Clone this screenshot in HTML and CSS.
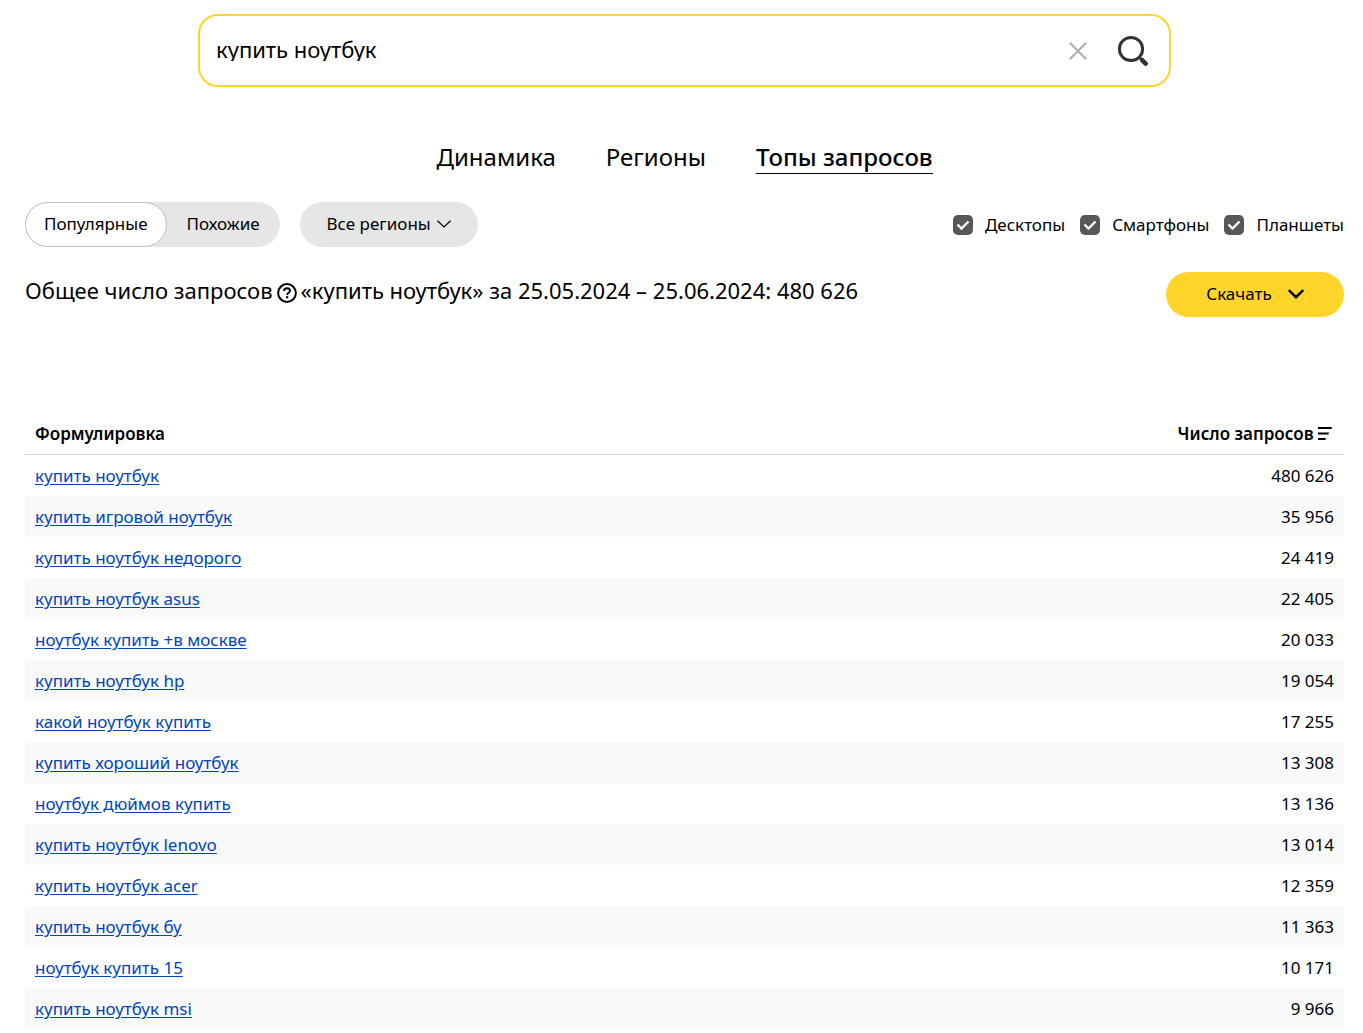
FILE: index.html
```html
<!DOCTYPE html>
<html lang="ru">
<head>
<meta charset="utf-8">
<meta name="viewport" content="width=device-width, initial-scale=1">
<title>Топы запросов</title>
<link rel="stylesheet" href="styles.css">
</head>
<body>
<div class="page">
  <form class="search" role="search">
    <input class="search__input" type="text" value="купить ноутбук" aria-label="Запрос">
    <button class="icon-button" type="reset" aria-label="Очистить">
      <svg width="20" height="20" viewBox="0 0 20 20" fill="none" stroke="#b0b0b0" stroke-width="2.200" stroke-linecap="round"><path d="M2.500 2.500l15 15M17.500 2.500l-15 15"/></svg>
    </button>
    <button class="icon-button" type="submit" aria-label="Найти">
      <svg width="32" height="32" viewBox="0 0 32 32" fill="none" stroke="#333"><circle cx="14" cy="14" r="11.600" stroke-width="3"/><path d="M22.500 22.500l2 2" stroke-width="2.500"/><path d="M25.300 25.300l3.400 3.400" stroke-width="4.600" stroke-linecap="round"/></svg>
    </button>
  </form>

  <nav class="tabs">
    <a class="tab" href="#dynamics">Динамика</a>
    <a class="tab" href="#regions">Регионы</a>
    <a class="tab tab--active" href="#tops" aria-current="page">Топы запросов</a>
  </nav>

  <div class="filters">
    <div class="switch">
      <button class="switch__item switch__item--active" type="button">Популярные</button>
      <button class="switch__item" type="button">Похожие</button>
    </div>
    <button class="pill pill--gray" type="button">Все регионы
      <svg width="14" height="8" viewBox="0 0 14 8" fill="none" stroke="#000" stroke-width="1.200"><path d="M.5 .7L7 7l6.500-6.300"/></svg>
    </button>
    <div class="devices">
      <label class="device"><input class="device__box" type="checkbox" checked>Десктопы</label>
      <label class="device"><input class="device__box" type="checkbox" checked>Смартфоны</label>
      <label class="device"><input class="device__box" type="checkbox" checked>Планшеты</label>
    </div>
  </div>

  <div class="summary">
    <p class="summary__text">Общее число запросов<svg class="summary__help" width="20" height="20" viewBox="0 0 20 20" fill="none" stroke="#000" stroke-width="2"><circle cx="10" cy="10" r="8.900"/><path d="M7 8c.1-1.800 1.300-2.800 3-2.800s3 1 3 2.500c0 2-2.900 2-2.900 4.200" stroke-width="1.900"/><path d="M10.100 13.200v2.100" stroke-width="2.200"/></svg>«купить ноутбук» за 25.05.2024 – 25.06.2024: 480 626</p>
    <button class="pill pill--yellow" type="button">Скачать
      <svg width="16" height="10" viewBox="0 0 16 10" fill="none" stroke="#000" stroke-width="2.400"><path d="M.8 1L8 8.200 15.200 1"/></svg>
    </button>
  </div>

  <table class="queries">
    <thead>
      <tr><th scope="col">Формулировка</th><th scope="col">Число запросов <svg class="sort" width="16" height="14" viewBox="0 0 16 14" fill="#000"><path d="M0 0h14l-.6 2H0zM0 5.500h11l-.6 2H0zM0 11h8l-.6 2H0z"/></svg></th></tr>
    </thead>
    <tbody>
      <tr><td><a href="#q1">купить ноутбук</a></td><td>480 626</td></tr>
      <tr><td><a href="#q2">купить игровой ноутбук</a></td><td>35 956</td></tr>
      <tr><td><a href="#q3">купить ноутбук недорого</a></td><td>24 419</td></tr>
      <tr><td><a href="#q4">купить ноутбук asus</a></td><td>22 405</td></tr>
      <tr><td><a href="#q5">ноутбук купить +в москве</a></td><td>20 033</td></tr>
      <tr><td><a href="#q6">купить ноутбук hp</a></td><td>19 054</td></tr>
      <tr><td><a href="#q7">какой ноутбук купить</a></td><td>17 255</td></tr>
      <tr><td><a href="#q8">купить хороший ноутбук</a></td><td>13 308</td></tr>
      <tr><td><a href="#q9">ноутбук дюймов купить</a></td><td>13 136</td></tr>
      <tr><td><a href="#q10">купить ноутбук lenovo</a></td><td>13 014</td></tr>
      <tr><td><a href="#q11">купить ноутбук acer</a></td><td>12 359</td></tr>
      <tr><td><a href="#q12">купить ноутбук бу</a></td><td>11 363</td></tr>
      <tr><td><a href="#q13">ноутбук купить 15</a></td><td>10 171</td></tr>
      <tr><td><a href="#q14">купить ноутбук msi</a></td><td>9 966</td></tr>
    </tbody>
  </table>
</div>
</body>
</html>
```
FILE: styles.css
```css
* {
  box-sizing: border-box;
}

body {
  margin: 0;
  background: #fff;
  color: #000;
  font: 17px/24px "Noto Sans", sans-serif;
}

button,
input {
  font: inherit;
  color: inherit;
}

button {
  border: 0;
  padding: 0;
  background: none;
  cursor: pointer;
}

.page {
  padding: 14px 19px 4px 25px;
}

.search {
  display: flex;
  align-items: center;
  gap: 29px;
  max-width: 973px;
  height: 73px;
  margin: 0 auto;
  padding: 0 20px 0 16px;
  border: 2px solid #ffd42b;
  border-radius: 20px;
}

.search__input {
  flex: 1;
  min-width: 0;
  padding: 0 0 4px;
  border: 0;
  outline: 0;
  background: none;
  font-size: 22px;
}

.icon-button {
  display: flex;
}

.tabs {
  display: flex;
  justify-content: center;
  gap: 50px;
  margin-top: 54px;
}

.tab {
  border-bottom: 1px solid transparent;
  color: inherit;
  font-size: 24px;
  line-height: 32px;
  text-decoration: none;
}

.tab--active {
  border-color: #000;
  font-weight: 500;
}

.filters {
  display: flex;
  align-items: center;
  gap: 20px;
  margin-top: 28px;
}

.switch {
  display: flex;
  border-radius: 23px;
  background: #e6e6e6;
}

.switch__item {
  height: 45px;
  padding: 0 20px 2px;
  border-radius: 23px;
}

.switch__item--active {
  border: 1px solid #bdbdbd;
  padding: 0 18px 2px;
  background: #fff;
}

.pill {
  display: flex;
  align-items: center;
  justify-content: center;
  flex: none;
  width: 178px;
  height: 45px;
  padding-bottom: 2px;
  border-radius: 23px;
}

.pill--gray {
  gap: 6px;
  background: #e6e6e6;
}

.pill--yellow {
  gap: 16px;
  background: #ffd42b;
}

.devices {
  display: flex;
  gap: 15px;
  margin-left: auto;
}

.device {
  display: flex;
  align-items: center;
  gap: 12px;
}

.device__box {
  appearance: none;
  width: 20px;
  height: 20px;
  margin: 0;
  border-radius: 5px;
  background: #575757 url("data:image/svg+xml,%3Csvg xmlns='http://www.w3.org/2000/svg' viewBox='0 0 20 20' fill='none' stroke='%23fff' stroke-width='2.400'%3E%3Cpath d='M4.500 9.500l4 4 7-7'/%3E%3C/svg%3E");
}

.summary {
  display: flex;
  align-items: flex-start;
  justify-content: space-between;
  margin-top: 25px;
}

.summary__text {
  margin: 0;
  padding-top: 2px;
  font-size: 22px;
  line-height: 32px;
}

.summary__help {
  margin: 0 4px;
  vertical-align: -4px;
}

.queries {
  width: 100%;
  margin-top: 96px;
  border-collapse: separate;
  border-spacing: 0;
}

.queries th,
.queries td {
  height: 41px;
  padding: 0 10px;
  text-align: left;
}

.queries th {
  height: 42px;
  border-bottom: 1px solid #dcdcdc;
  font-weight: 600;
}

.queries th:last-child,
.queries td:last-child {
  text-align: right;
}

.queries tbody tr:nth-child(even) {
  background: #f9f9f9;
}

.queries a {
  color: #04b;
  text-underline-offset: 2px;
}

.sort {
  vertical-align: -1px;
}
```
